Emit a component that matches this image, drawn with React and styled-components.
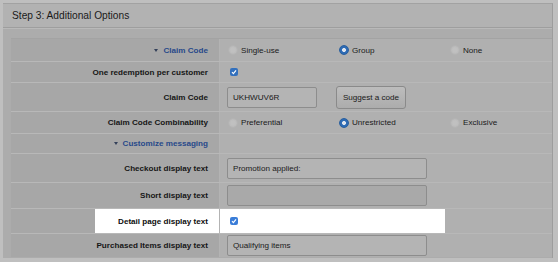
import React from 'react'
import styled, { createGlobalStyle } from 'styled-components'

const GlobalStyle = createGlobalStyle`
  html, body { margin:0; padding:0; background:#bfbfbf; }
  body { font-family: 'Liberation Sans', Arial, sans-serif; }
`

const Frame = styled.div`
  margin: 3px 0 0 3px;
  width: 550px;
  height: 255px;
  background: #acacac;
  border-top: 1px solid #a2a2a2;
  border-right: 1px solid #9d9d9d;
  box-sizing: border-box;
  overflow: hidden;
`

const Header = styled.div`
  height: 23px;
  display: flex;
  align-items: center;
  padding-left: 9px;
  font-size: 10.2px;
  color: #1a1a1a;
  background: #b2b2b2;
  border-bottom: 1px solid #9e9e9e;
  box-shadow: 0 1px 0 #b9b9b9;
`

const Body = styled.div`
  padding: 10px 0 0 8px;
`

const Table = styled.div`
  border-top: 1px solid #a3a3a3;
`

const Row = styled.div`
  display: grid;
  grid-template-columns: 209px 1fr;
  box-sizing: border-box;
  height: ${p => p.$h}px;
  & + & { border-top: 1px solid #b8b8b8; }
`

const Label = styled.div`
  display: flex;
  align-items: center;
  justify-content: flex-end;
  padding-right: 11px;
  font-size: 8.1px;
  font-weight: 700;
  color: ${p => (p.$spot ? '#0d0d0d' : '#161616')};
  background: ${p => (p.$spot ? 'linear-gradient(to right, #a7a7a7 84px, #fff 84px)' : '#a7a7a7')};
  border-right: 1px solid #b3b3b3;
`

const Value = styled.div`
  display: flex;
  align-items: center;
  padding-left: 7px;
  font-size: 8.1px;
  color: #1a1a1a;
  background: ${p => (p.$spot ? 'linear-gradient(to right, #fff 225px, #b0b0b0 225px)' : '#b0b0b0')};
`

const Toggle = styled.span`
  display: flex;
  align-items: center;
  gap: 5px;
  color: #27498a;
  &::before {
    content: '';
    border-left: 2px solid transparent;
    border-right: 2px solid transparent;
    border-top: 3px solid #34415a;
  }
`

const Option = styled.label`
  width: 110px;
  display: flex;
  align-items: center;
  gap: 3px;
  margin-left: 1px;
`

const Radio = styled.span`
  width: 10px;
  height: 10px;
  border-radius: 50%;
  box-sizing: border-box;
  background: ${p => (p.$on ? 'radial-gradient(circle, #dfe5ee 0 1.6px, #2e6bb4 2.3px)' : 'radial-gradient(circle, #c0c0c0 0 2px, #b7b7b7 5px)')};
  border: 1px solid ${p => (p.$on ? '#285f9f' : '#b4b4b4')};
`

const Check = styled.span`
  width: 8px;
  height: 8px;
  margin-left: 3px;
  border-radius: 2px;
  background: ${p => (p.$spot ? '#3a7dd8' : '#3270bd')};
  display: flex;
  align-items: center;
  justify-content: center;
`

const Field = styled.div`
  width: ${p => p.$w}px;
  height: 21px;
  box-sizing: border-box;
  display: flex;
  align-items: center;
  padding-left: 5px;
  border: 1px solid #8d8d8d;
  border-radius: 2px;
  background: ${p => (p.$off ? '#a9a9a9' : '#b4b4b4')};
  color: #1a1a1a;
`

const Button = styled.div`
  margin-left: 19px;
  width: 70px;
  height: 23px;
  box-sizing: border-box;
  display: flex;
  align-items: center;
  justify-content: center;
  border: 1px solid #8a8a8a;
  border-radius: 3px;
  background: linear-gradient(#bdbdbd, #acacac);
  color: #1a1a1a;
`

const Tick = () => (
  <svg width="6" height="6" viewBox="0 0 6 6">
    <path d="M1 3.2 L2.4 4.6 L5 1.4" fill="none" stroke="#fff" strokeWidth="1.2" />
  </svg>
)

const Radios = ({ items, on }) => (
  <>
    {items.map(t => (
      <Option key={t}>
        <Radio $on={t === on} />
        {t}
      </Option>
    ))}
  </>
)

export default function App() {
  return (
    <>
      <GlobalStyle />
      <Frame>
        <Header>Step 3: Additional Options</Header>
        <Body>
          <Table>
            <Row $h={22}>
              <Label><Toggle>Claim Code</Toggle></Label>
              <Value><Radios items={['Single-use', 'Group', 'None']} on="Group" /></Value>
            </Row>
            <Row $h={21}>
              <Label>One redemption per customer</Label>
              <Value><Check><Tick /></Check></Value>
            </Row>
            <Row $h={29}>
              <Label>Claim Code</Label>
              <Value>
                <Field $w={90}>UKHWUV6R</Field>
                <Button>Suggest a code</Button>
              </Value>
            </Row>
            <Row $h={22}>
              <Label>Claim Code Combinability</Label>
              <Value><Radios items={['Preferential', 'Unrestricted', 'Exclusive']} on="Unrestricted" /></Value>
            </Row>
            <Row $h={20}>
              <Label><Toggle>Customize messaging</Toggle></Label>
              <Value />
            </Row>
            <Row $h={29}>
              <Label>Checkout display text</Label>
              <Value><Field $w={200}>Promotion applied:</Field></Value>
            </Row>
            <Row $h={26}>
              <Label>Short display text</Label>
              <Value><Field $w={200} $off /></Value>
            </Row>
            <Row $h={25}>
              <Label $spot>Detail page display text</Label>
              <Value $spot><Check $spot><Tick /></Check></Value>
            </Row>
            <Row $h={24}>
              <Label>Purchased Items display text</Label>
              <Value><Field $w={200}>Qualifying items</Field></Value>
            </Row>
          </Table>
        </Body>
      </Frame>
    </>
  )
}
